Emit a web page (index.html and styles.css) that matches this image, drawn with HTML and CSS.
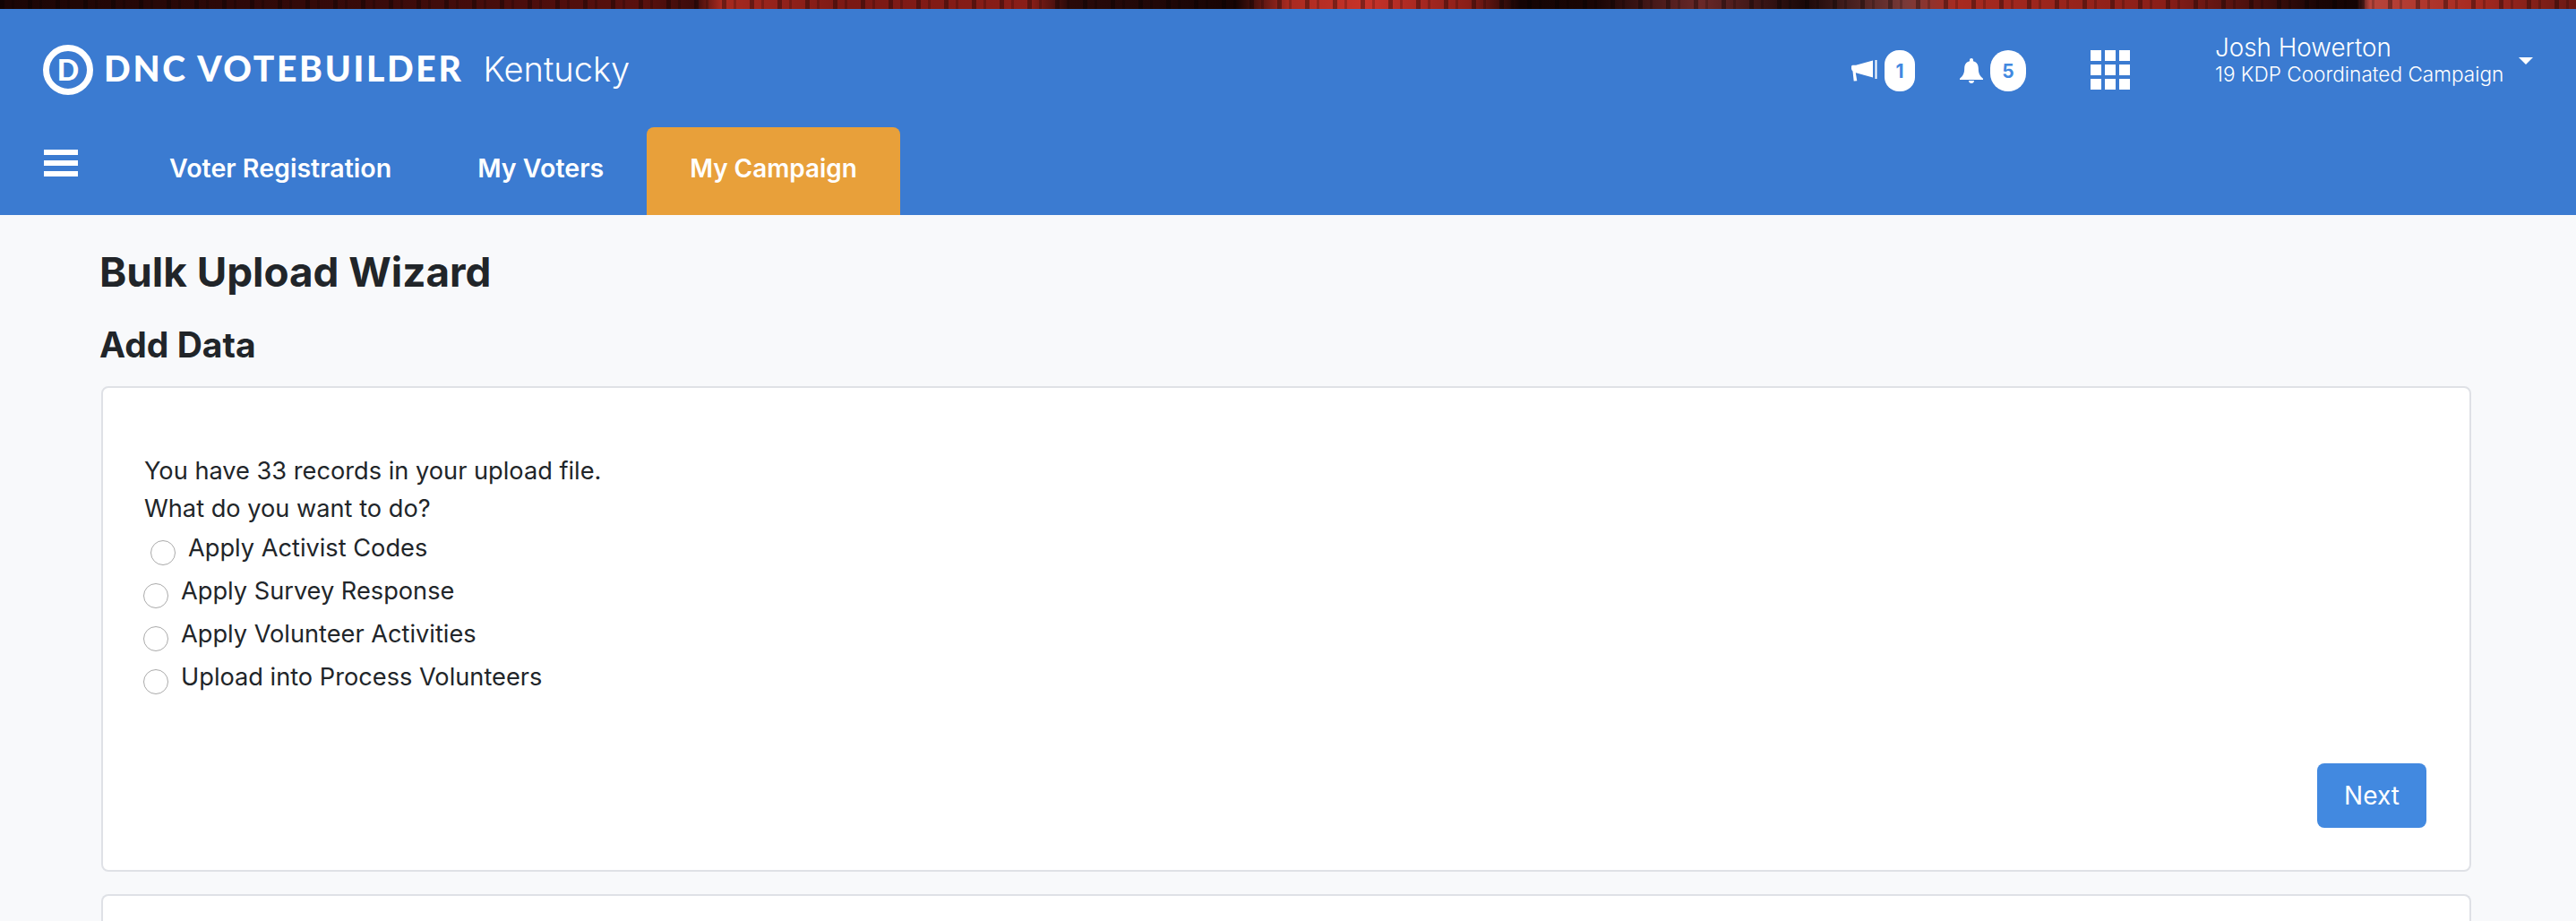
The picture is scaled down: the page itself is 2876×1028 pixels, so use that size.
FILE: index.html
```html
<!DOCTYPE html>
<html>
<head>
<title>Bulk Upload Wizard</title>
<meta charset="UTF-8">
<link rel="stylesheet" href="styles.css">
</head>
<body>

<!-- photo strip above the header -->
<div class="strip"></div>

<div class="header">
  <div class="topbar">
    <div class="brand">
      <span class="logo-ring"><span class="logo-d">D</span></span>
      <span class="brand-name">DNC VOTEBUILDER</span>
      <span class="brand-state">Kentucky</span>
    </div>
    <div class="tools">
      <div class="tool tool-horn">
        <svg class="icon-horn" viewBox="0 0 29 24" width="29" height="24">
          <path d="M0 7.500c0-1 .6-1.800 1.500-1.800H5L24 0.500V19.500L14 16.800 5 14.300H4.800L6.300 23.200 2.700 23.500 1.500 12.500C.6 12 0 10.200 0 9.300Z" fill="#fff"/>
          <rect x="26.500" y="0" width="2" height="21" fill="#fff"/>
        </svg>
        <span class="badge badge-narrow">1</span>
      </div>
      <div class="tool tool-bell">
        <svg class="icon-bell" viewBox="0 0 26 28" width="26" height="28">
          <path d="M13 0c1.200 0 2 .8 2 2v1.200c3.700.8 5.800 3.900 5.800 7.800 0 6 1.600 8.500 5.200 11.800V24H0v-1.200C3.600 19.500 5.200 17 5.200 11c0-3.900 2.100-7 5.800-7.800V2c0-1.200.8-2 2-2Z" fill="#fff"/>
          <path d="M10 25h6c0 1.800-1.300 3-3 3s-3-1.200-3-3Z" fill="#fff"/>
        </svg>
        <span class="badge">5</span>
      </div>
      <div class="apps">
        <i></i><i></i><i></i><i></i><i></i><i></i><i></i><i></i><i></i>
      </div>
      <div class="user">
        <div class="user-name">Josh Howerton</div>
        <div class="user-org">19 KDP Coordinated Campaign</div>
      </div>
      <span class="caret"></span>
    </div>
  </div>
  <div class="navbar">
    <div class="burger"><i></i><i></i><i></i></div>
    <a class="tab">Voter Registration</a>
    <a class="tab">My Voters</a>
    <a class="tab tab-active">My Campaign</a>
  </div>
</div>

<div class="content">
  <h1>Bulk Upload Wizard</h1>
  <h2>Add Data</h2>

  <div class="card card-main">
    <p class="line">You have 33 records in your upload file.</p>
    <p class="line">What do you want to do?</p>
    <label class="option option-first"><input type="radio" name="action"><span>Apply Activist Codes</span></label>
    <label class="option"><input type="radio" name="action"><span>Apply Survey Response</span></label>
    <label class="option"><input type="radio" name="action"><span>Apply Volunteer Activities</span></label>
    <label class="option"><input type="radio" name="action"><span>Upload into Process Volunteers</span></label>
    <div class="actions">
      <button class="next">Next</button>
    </div>
  </div>

  <div class="card card-next"></div>
</div>

</body>
</html>
```

FILE: styles.css
```css
* {
  box-sizing: border-box;
}

body {
  font-family: Inter, "Liberation Sans", sans-serif;
  margin: 0;
  height: 100vh;
  overflow: hidden;
  background: #f8f9fb;
  color: #212529;
}

/* dark red photo, only a sliver of it shows */
.strip {
  height: 10px;
  background:
    repeating-linear-gradient(90deg, rgba(0,0,0,.35) 0 5px, rgba(0,0,0,0) 5px 13px, rgba(0,0,0,.2) 13px 16px, rgba(0,0,0,0) 16px 31px),
    linear-gradient(90deg,
    #1a0505 0%, #3a0a0a 15%, #5a100e 25%, #3a0b0a 27%, #a82a20 28%, #7a1814 33%,
    #8a1e18 40%, #2a0a0a 41.500%, #170404 48%, #a82a20 50%, #c8332a 53%, #8a1e18 57%,
    #140404 59%, #1a0505 62%, #6a2828 66%, #1a0808 70%, #7a3a38 74%, #a82a20 76%,
    #8a1e18 84%, #1a0505 90%, #140404 91.500%, #b8453c 92%, #a82a20 96%, #6a1814 100%);
}

/* Header */
.header {
  background: #3b7bd1;
  color: #fff;
  height: 230px;
}

.topbar {
  height: 132px;
  display: flex;
  justify-content: space-between;
}

.brand {
  display: flex;
  align-items: center;
  padding: 0 0 0 48px;
  height: 132px;
}

.logo-ring {
  width: 56px;
  height: 56px;
  border: 7px solid #fff;
  border-radius: 50%;
  display: flex;
  align-items: center;
  justify-content: center;
  margin-top: 3px;
}

.logo-d {
  font-family: Lato, sans-serif;
  font-weight: 900;
  font-size: 32px;
  line-height: 1;
}

.brand-name {
  font-family: Lato, sans-serif;
  font-weight: 900;
  font-size: 39px;
  margin-left: 12px;
  margin-top: 0;
  letter-spacing: 2.700px;
}

.brand-state {
  font-weight: 300;
  font-size: 38px;
  margin-left: 22px;
  margin-top: 2px;
}

.tools {
  display: flex;
  align-items: flex-start;
  padding-top: 46px;
}

.tool {
  display: flex;
  align-items: center;
}

.tool-horn {
  width: 121px;
}

.tool-bell {
  width: 146px;
}

.icon-horn {
  margin-right: 8px;
}

.icon-bell {
  margin-right: 8px;
}

.badge {
  width: 40px;
  height: 46px;
  border-radius: 20px;
  background: #fff;
  color: #4289e0;
  font-size: 21px;
  font-weight: 700;
  display: flex;
  align-items: center;
  justify-content: center;
}

.badge-narrow {
  width: 34px;
  border-radius: 16px;
}

.apps {
  display: grid;
  grid-template-columns: repeat(3, 12px);
  grid-auto-rows: 12px;
  gap: 4px;
  margin-right: 95px;
}

.apps i {
  background: #fff;
}

.user {
  margin-top: -19px;
  width: 339px;
}

.user-name {
  font-size: 27.800px;
  font-weight: 300;
  line-height: 32px;
}

.user-org {
  font-size: 22.600px;
  font-weight: 300;
  line-height: 28px;
}

.caret {
  width: 0;
  height: 0;
  border-left: 8px solid transparent;
  border-right: 8px solid transparent;
  border-top: 8px solid #fff;
  margin-top: 8px;
  margin-right: 48px;
}

.navbar {
  height: 98px;
  display: flex;
  padding-left: 49px;
}

.burger {
  width: 92px;
  padding-top: 25px;
}

.burger i {
  display: block;
  width: 38px;
  height: 6px;
  background: #fff;
  margin-bottom: 6px;
}

.tab {
  padding: 0 48px;
  line-height: 92px;
  font-size: 28.600px;
  font-weight: 600;
  border-radius: 8px 8px 0 0;
}

.tab-active {
  background: #e8a03a;
  font-size: 27.900px;
}

/* Page body */
.content {
  padding: 0 117px 0 113px;
}

h1 {
  font-size: 45.800px;
  font-weight: 700;
  margin: 0 0 0 -2px;
  padding-top: 36px;
  line-height: 56px;
}

h2 {
  font-size: 39px;
  font-weight: 700;
  margin: 0 0 0 -2px;
  padding-top: 30px;
  line-height: 46px;
}

.card {
  background: #fff;
  border: 2px solid #dfe1e6;
  border-radius: 8px;
}

.card-main {
  margin-top: 23px;
  height: 542px;
  padding: 72px 48px 0 46px;
  font-size: 27.200px;
  line-height: 42px;
}

/* runs off the bottom of the window */
.card-next {
  margin-top: 25px;
  height: 30px;
  border-bottom: 0;
  border-radius: 8px 8px 0 0;
}

.line {
  margin: 0;
}

.option {
  display: flex;
  align-items: flex-start;
  height: 48px;
  line-height: 46px;
  margin-left: -1px;
}

.option input {
  appearance: none;
  width: 28px;
  height: 28px;
  border: 1.500px solid #aaa;
  border-radius: 50%;
  background: #fff;
  margin: 14px 14px 0 0;
}

.option-first {
  padding-left: 8px;
}

.actions {
  display: flex;
  justify-content: flex-end;
  margin-top: 71px;
}

.next {
  width: 122px;
  height: 72px;
  background: #4289e0;
  border: 0;
  border-radius: 8px;
  color: #fff;
  font-family: inherit;
  font-size: 28px;
}
```
